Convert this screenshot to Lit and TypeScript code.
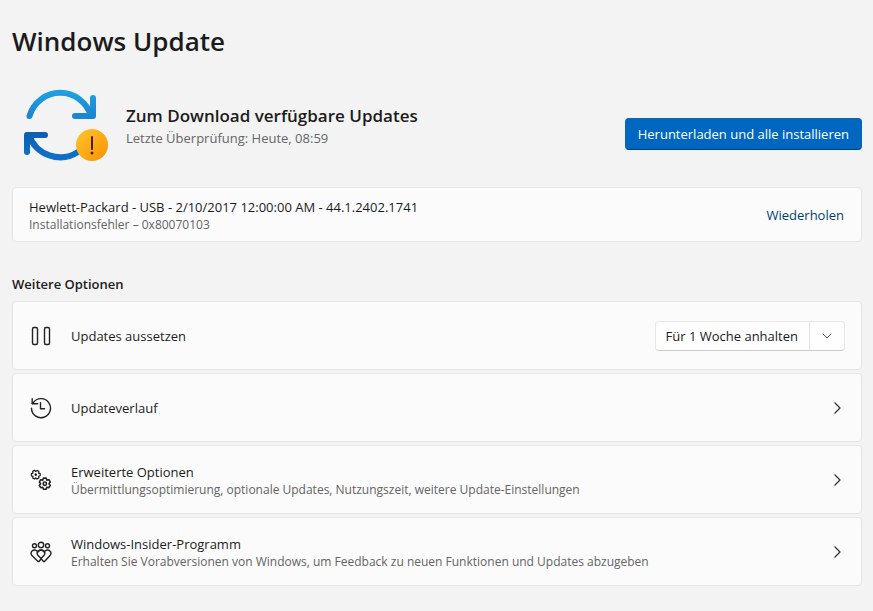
import { LitElement, html, css, svg, nothing } from "lit";
import { customElement } from "lit/decorators.js";

const pauseIcon = svg`
  <rect x="2.500" y="2.500" width="5" height="17" rx="1.500"/>
  <rect x="14.500" y="2.500" width="5" height="17" rx="1.500"/>`;

const historyIcon = svg`
  <path d="M1.500 11.200A9.500 9.500 0 1 0 3.600 5.200L2.300 6.600"/>
  <path d="M2.200 1.600V6.800H7.600M10.500 5.800V11.800H14.500"/>`;

const gearShape = svg`
  <path d="M-1.2 -5H1.2L1.800 -3.200L3.700 -3.600L4.900 -1.500L3.700 0L4.900 1.500L3.700 3.600L1.800 3.200L1.2 5H-1.2L-1.800 3.200L-3.700 3.600L-4.900 1.500L-3.700 0L-4.900 -1.500L-3.700 -3.600L-1.800 -3.200Z"/>`;

const gearsIcon = svg`
  <g transform="translate(5.800 5.700) scale(.88) rotate(30)">${gearShape}<circle r=".8"/></g>
  <g transform="translate(14.800 14.700) scale(1.12)">${gearShape}<circle r="1.500"/></g>`;

const insiderIcon = svg`
  <circle cx="11" cy="3.900" r="2.700"/>
  <circle cx="4.500" cy="4.700" r="2"/>
  <circle cx="17.500" cy="4.700" r="2"/>
  <path d="M11 18L9 20.500H8L2 14.600C-.6 11.400 3.200 7.400 6.800 9.800L8 10.900L9.200 9.800C12.600 7.400 16.600 11.400 13.900 14.600L11 17.600"/>
  <path d="M11 17.600L13.500 20.500H14.500L20 14.600C22.600 11.400 18.800 7.400 15.200 9.800L14 10.900L12.800 9.800C9.400 7.400 5.400 11.400 8.100 14.600L11 17.600"/>`;

const options = [
  { icon: gearsIcon, title: "Erweiterte Optionen", detail: "Übermittlungsoptimierung, optionale Updates, Nutzungszeit, weitere Update-Einstellungen" },
  { icon: insiderIcon, title: "Windows-Insider-Programm", detail: "Erhalten Sie Vorabversionen von Windows, um Feedback zu neuen Funktionen und Updates abzugeben" },
];

@customElement("app-root")
export class AppRoot extends LitElement {
  static styles = css`
    :host {
      display: block;
      box-sizing: border-box;
      min-height: 100vh;
      padding: 20px 11px 25px 12px;
      background: #f3f3f3;
      color: #1b1b1b;
      font: 13px/20px "Segoe UI Variable", "Segoe UI", "Open Sans", "Noto Sans", sans-serif;
    }
    h1, h2, h3, p { margin: 0; font-weight: 600; }
    h1 { font-size: 26px; line-height: 42px; }
    h2 { font-size: 17px; line-height: 24px; }
    h3 { font-size: 13px; line-height: 20px; margin: 32px 0 7px; }
    p { font-weight: 400; }
    button { font: inherit; color: inherit; margin: 0; border: 0; background: none; cursor: pointer; }
    svg { display: block; flex: none; fill: none; stroke-linecap: round; stroke-linejoin: round; }
    .status { display: flex; align-items: center; gap: 16px; margin: 26px 0 23px; }
    .sync { margin-left: 8px; }
    .text { flex: 1; min-width: 0; text-align: left; }
    .muted { color: #666; }
    .primary {
      height: 32px;
      padding: 0 12px;
      margin-top: 16px;
      border: 1px solid #0a63b8;
      border-bottom-color: #00427e;
      border-radius: 4px;
      background: #0067c0;
      color: #fff;
    }
    .card {
      display: flex;
      align-items: center;
      box-sizing: border-box;
      width: 100%;
      min-height: 69px;
      padding: 8px 16px;
      border: 1px solid #e5e5e5;
      border-radius: 4px;
      background: #fbfbfb;
    }
    .error { min-height: 55px; }
    .link { padding: 4px 1px; color: #003e73; }
    .list { display: grid; gap: 3px; }
    .icon { width: 22px; height: 22px; margin: 0 19px 0 1px; stroke: #222; stroke-width: 1.4; }
    .title { display: block; }
    .detail { display: block; font-size: 12px; line-height: 16px; color: #636363; }
    .chevron { width: 12px; height: 12px; margin-right: 2px; stroke: #333; stroke-width: 1.3; }
    .split {
      display: flex;
      height: 30px;
      box-sizing: border-box;
      border: 1px solid #e7e7e7;
      border-bottom-color: #ccc;
      border-radius: 4px;
      background: #fefefe;
    }
    .split button { padding: 0 11px 0 10px; }
    .split .more { width: 35px; padding: 0 12px; border-left: 1px solid #e5e5e5; }
    .down { width: 10px; height: 10px; stroke: #555; stroke-width: 1; }
  `;

  private icon(shape: unknown) {
    return html`<svg class="icon" viewBox="0 0 22 22" aria-hidden="true">${shape}</svg>`;
  }

  private row(shape: unknown, title: string, detail?: string) {
    return html`
      <button class="card">
        ${this.icon(shape)}
        <span class="text">
          <span class="title">${title}</span>
          ${detail ? html`<span class="detail">${detail}</span>` : nothing}
        </span>
        <svg class="chevron" viewBox="0 0 12 12" aria-hidden="true"><path d="M4 1L9 6L4 11"/></svg>
      </button>`;
  }

  render() {
    return html`
      <main>
        <h1>Windows Update</h1>
        <section class="status">
          <svg class="sync" width="90" height="76" viewBox="0 0 90 76" aria-hidden="true">
            <defs>
              <linearGradient id="top" x1="0" y1="0" x2="0" y2="1"><stop stop-color="#1f9fe0"/><stop offset="1" stop-color="#1a86d4"/></linearGradient>
              <linearGradient id="bottom" x1="0" y1="0" x2="0" y2="1"><stop stop-color="#0c60b2"/><stop offset="1" stop-color="#0f70c8"/></linearGradient>
              <linearGradient id="warn" x1="0" y1="0" x2="1" y2="1"><stop stop-color="#ffc629"/><stop offset="1" stop-color="#fb9105"/></linearGradient>
            </defs>
            <g stroke-width="6">
              <path stroke="url(#top)" d="M9.500 28A32 32 0 0 1 71 28M73 10V28H55"/>
              <path stroke="url(#bottom)" d="M9 47A33 33 0 0 0 58 64M7 64V47H25"/>
            </g>
            <circle cx="72" cy="57" r="16" fill="url(#warn)"/>
            <path d="M72 49V61" stroke="#4a1c08" stroke-width="2"/>
            <circle cx="72" cy="65" r="1.500" fill="#4a1c08"/>
          </svg>
          <div class="text">
            <h2>Zum Download verfügbare Updates</h2>
            <p class="muted">Letzte Überprüfung: Heute, 08:59</p>
          </div>
          <button class="primary">Herunterladen und alle installieren</button>
        </section>
        <section class="card error">
          <div class="text">
            <p>Hewlett-Packard - USB - 2/10/2017 12:00:00 AM - 44.1.2402.1741</p>
            <p class="detail">Installationsfehler – 0x80070103</p>
          </div>
          <button class="link">Wiederholen</button>
        </section>
        <h3>Weitere Optionen</h3>
        <section class="list">
          <div class="card">
            ${this.icon(pauseIcon)}
            <span class="text">Updates aussetzen</span>
            <div class="split">
              <button>Für 1 Woche anhalten</button>
              <button class="more" aria-label="Dauer auswählen" aria-haspopup="menu">
                <svg class="down" viewBox="0 0 10 10" aria-hidden="true"><path d="M1 3L5 7L9 3"/></svg>
              </button>
            </div>
          </div>
          ${this.row(historyIcon, "Updateverlauf")}
          ${options.map((o) => this.row(o.icon, o.title, o.detail))}
        </section>
      </main>`;
  }
}
